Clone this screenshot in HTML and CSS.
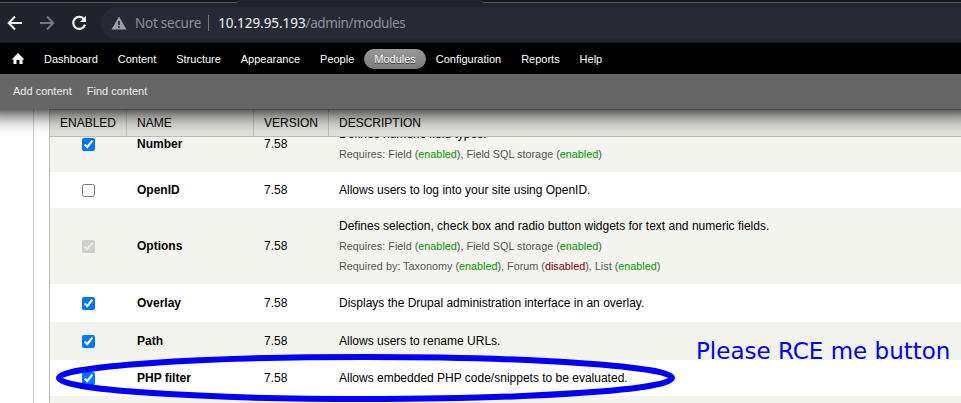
FILE: index.html
```html
<!DOCTYPE html>
<html lang="en">
<head>
<meta charset="utf-8">
<title>Modules</title>
<link rel="stylesheet" href="styles.css">
</head>
<body>
<header class="browser">
  <div class="tabs"><div class="tab-left"></div><div class="tab-right"></div></div>
  <div class="nav">
    <svg class="nav-icon" viewBox="0 0 16 16"><path d="M15 8H2M8 1.5L1.7 8L8 14.500" fill="none" stroke="#f1f1f1" stroke-width="2"/></svg>
    <svg class="nav-icon" viewBox="0 0 16 16"><path d="M1 8H14M8 1.500L14.300 8L8 14.500" fill="none" stroke="#77787c" stroke-width="2"/></svg>
    <svg class="nav-icon" viewBox="0 0 16 16"><path d="M13.200 4.500A6 6 0 1 0 14 9.700" fill="none" stroke="#f1f1f1" stroke-width="2.200"/><path d="M15 .8V7H8.800Z" fill="#f1f1f1"/></svg>
    <div class="address">
      <svg class="warn" viewBox="0 0 16 14"><path d="M8 .5L15.500 13.500H.5Z" fill="#9aa0a6"/><path d="M8 5V9M8 10.200V12" stroke="#272935" stroke-width="1.700"/></svg>
      <span class="insecure">Not secure</span>
      <span class="divider"></span>
      <span class="url"><b>10.129.95.193</b>/admin/modules</span>
    </div>
  </div>
</header>
<div class="toolbar">
  <nav class="menu">
    <svg class="home" viewBox="0 0 12 11"><path d="M6 0L12 6V6.500H10.500V11H7.500V7H4.500V11H1.500V6.500H0V6Z" fill="#fff"/></svg>
    <a>Dashboard</a><a>Content</a><a>Structure</a><a>Appearance</a><a>People</a><a class="active">Modules</a><a>Configuration</a><a>Reports</a><a>Help</a>
  </nav>
  <div class="shortcuts"><a>Add content</a><a>Find content</a></div>
</div>
<main class="page">
  <div class="modules">
    <div class="row head"><div>ENABLED</div><div>NAME</div><div>VERSION</div><div>DESCRIPTION</div></div>
    <div class="list">
      <div class="row odd number"><div><input type="checkbox" checked></div><strong>Number</strong><div>7.58</div><div><p>Defines numeric field types.</p><small>Requires: Field (<i class="on">enabled</i>), Field SQL storage (<i class="on">enabled</i>)</small></div></div>
      <div class="row openid"><div><input type="checkbox"></div><strong>OpenID</strong><div>7.58</div><div><p>Allows users to log into your site using OpenID.</p></div></div>
      <div class="row odd options"><div><input type="checkbox" checked disabled></div><strong>Options</strong><div>7.58</div><div><p>Defines selection, check box and radio button widgets for text and numeric fields.</p><small>Requires: Field (<i class="on">enabled</i>), Field SQL storage (<i class="on">enabled</i>)</small><small>Required by: Taxonomy (<i class="on">enabled</i>), Forum (<i class="off">disabled</i>), List (<i class="on">enabled</i>)</small></div></div>
      <div class="row"><div><input type="checkbox" checked></div><strong>Overlay</strong><div>7.58</div><div><p>Displays the Drupal administration interface in an overlay.</p></div></div>
      <div class="row odd"><div><input type="checkbox" checked></div><strong>Path</strong><div>7.58</div><div><p>Allows users to rename URLs.</p></div></div>
      <div class="row php"><div><input type="checkbox" checked></div><strong>PHP filter</strong><div>7.58</div><div><p>Allows embedded PHP code/snippets to be evaluated.</p></div></div>
      <div class="row odd"></div>
    </div>
  </div>
</main>
<svg class="ring" viewBox="0 0 961 403"><ellipse cx="365.500" cy="378" rx="306.500" ry="21" fill="none" stroke="#00f" stroke-width="6"/></svg>
<div class="note">Please RCE me button</div>
</body>
</html>
```
FILE: styles.css
```css
* { box-sizing: border-box; }
body { margin: 0; width: 961px; height: 403px; overflow: hidden; position: relative; background: #fff; color: #000; font: 12px/20px "Liberation Sans", Arial, sans-serif; }
.browser { height: 43px; background: #21232d; border-bottom: 1px solid #15161c; }
.tabs { height: 3px; display: flex; justify-content: space-between; }
.tab-left { width: 239px; background: #17181d; border-bottom: 1px solid #55565b; border-bottom-right-radius: 3px; }
.tab-right { width: 480px; background: #17181d; border-bottom: 1px solid #55565b; border-bottom-left-radius: 3px; }
.nav { height: 39px; display: flex; align-items: center; padding: 1px 0 0 7px; gap: 16px; }
.nav-icon { width: 16px; height: 16px; flex: none; }
.address { flex: 1; height: 32px; margin-left: -2px; padding-left: 10px; border-radius: 16px 0 0 16px; background: #272935; display: flex; align-items: center; font: 13.500px/20px "Noto Sans", sans-serif; letter-spacing: -.25px; color: #8f9196; white-space: nowrap; }
.warn { width: 16px; height: 14px; }
.insecure { margin-left: 8px; }
.divider { width: 1px; height: 16px; margin: 0 9px 0 7px; background: #77797f; }
.url b { font-weight: 400; color: #f1f1f1; letter-spacing: -.05px; }
.url { letter-spacing: -.4px; }
.toolbar { position: relative; z-index: 2; margin: 0 -20px; padding: 0 20px; height: 66px; background: #666; box-shadow: 0 3px 20px #000; clip-path: inset(0 0 -40px 0); font-size: 11px; color: #fff; }
.menu { height: 31px; margin: 0 -20px; padding-left: 33px; background: #000; display: flex; align-items: center; }
.home { width: 12px; height: 11px; margin: 0 10px 0 -1px; }
.menu a { padding: 0 9.980px; line-height: 20px; }
.menu .active { background: linear-gradient(#999, #7b7b7b); border-radius: 10px; text-shadow: 0 1px #333; }
.shortcuts { height: 34px; display: flex; align-items: center; gap: 15px; padding-left: 13px; color: #eee; }
.page { height: 294px; margin-left: 33px; border-left: 1px solid #ccc; padding-left: 15px; }
.modules { border-left: 1px solid #bebfb9; }
.row { display: grid; grid-template-columns: 77px 127px 75px 1fr; align-items: center; height: 38px; background: #fff; }
.row > * { padding-left: 10px; }
.row > :first-child { padding-left: 32px; }
.odd { background: #f3f4ee; }
.head { grid-template-columns: 76px 127px 75px 1fr; height: 28px; background: #e1e2dc; border-top: 1px solid #bebfb9; border-bottom: 1px solid #bebfb9; }
.row.head > div { height: 26px; line-height: 26px; padding-left: 10px; border-left: 1px solid #bebfb9; }
.row.head > :first-child { border: 0; }
.list { height: 266px; overflow: hidden; }
.number { height: 56px; margin-top: -21px; }
.openid { height: 36px; }
.options { height: 76px; }
.php { height: 36px; }
p { margin: 0; }
small { display: block; font-size: 10.820px; color: #555; }
small i { font-style: normal; }
.on { color: #090; }
.off { color: #800000; }
input { display: block; width: 13px; height: 13px; margin: 0; }
.ring { position: absolute; z-index: 3; left: 0; top: 0; width: 961px; height: 403px; }
.note { position: absolute; z-index: 3; left: 696px; top: 337px; font: 23px/28px "DejaVu Sans", sans-serif; color: #00f; white-space: nowrap; }
```
